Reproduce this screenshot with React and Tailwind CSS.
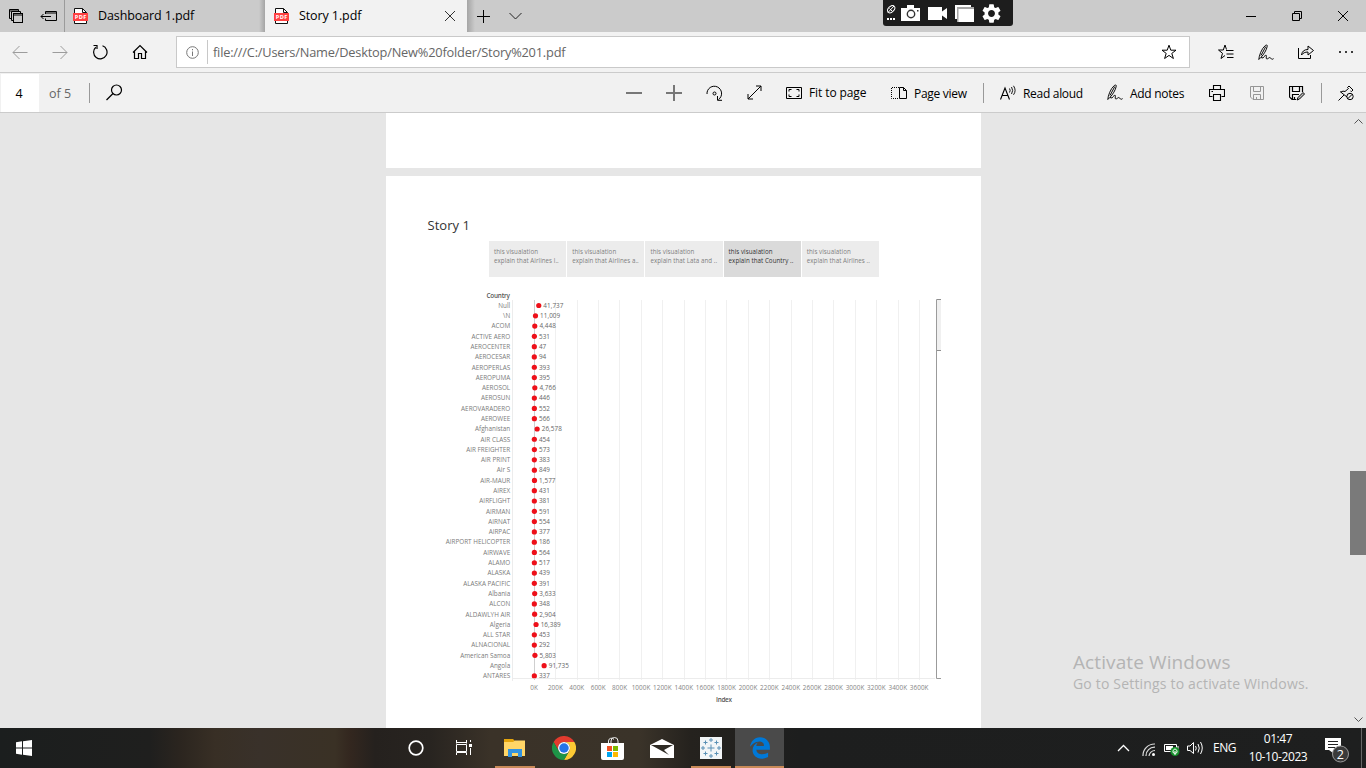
import React from "react";
import { FaEdgeLegacy } from "react-icons/fa6";
import { MdSettings } from "react-icons/md";

const Svg = ({ w = 16, h = 16, children, className = "", sw = 1 }) => (
  <svg width={w} height={h} viewBox={`0 0 ${w} ${h}`} fill="none" stroke="currentColor" strokeWidth={sw} className={"shrink-0 " + className}>
    {children}
  </svg>
);

const Cell = ({ className = "", children }) => (
  <div className={"flex h-full shrink-0 items-center justify-center " + className}>{children}</div>
);

const PdfIcon = () => (
  <Svg w={15} h={16}>
    <path d="M1.5 .5H9.5L13.5 4.5V15.5H1.5Z" fill="#fff" stroke="#111" />
    <path d="M9.5 .5V4.5H13.5" stroke="#111" />
    <rect x="0" y="5" width="15" height="8" fill="#ff4141" stroke="none" />
    <text x="7.5" y="11.3" textAnchor="middle" fontSize="5.6" fontWeight="700" fill="#fff" stroke="none" textLength="11.5" fontFamily="Open Sans, sans-serif">PDF</text>
  </Svg>
);

const Pen = ({ className }) => (
  <Svg w={16} h={17} className={className}>
    <path d="M.8 15.500C1 12 3.500 4.500 7.300 1.500C8.500 .5 9.600 1 9.200 2.500C8.500 6 5.800 10.500 3 13.300L.8 15.500M7.800 2.500L3 11.500M3 13.500L5 14C7 11 9 10.300 8.300 12.800C7.800 15 8.800 15.500 10.300 14.300C11.700 13.100 12.300 13.400 13 14.500C13.600 15.500 14.600 15.500 15.600 14.600" strokeWidth=".95" />
  </Svg>
);

function TitleBar() {
  return (
    <div className="relative flex h-8 shrink-0 bg-[#cbcbcb] text-black">
      <Cell className="w-8">
        <Svg w={14} h={14}>
          <path d="M2.5 9.5H.5V.5H9.5V2.5M.5 2H9.5" />
          <path d="M4.5 11.5H2.5V2.5H11.5V4.5" />
          <rect x="4.5" y="4.5" width="9" height="9" />
          <path d="M4.5 6H13.5" />
        </Svg>
      </Cell>
      <Cell className="w-8">
        <Svg w={17} h={12}>
          <path d="M5.5 4V1.5H16.5V10.5H5.5V8.500M5.5 3H16.5M1 6.5H11M3.5 4L1 6.5L3.5 9" />
        </Svg>
      </Cell>
      <div className="w-px bg-[#9b9b9b]" />
      <div className="flex w-[200px] items-center bg-linear-to-r from-[#cbcbcb] from-97% to-[#a5a5a5] pl-2">
        <PdfIcon />
        <span className="ml-2.5 text-[12.5px] tracking-[-0.1px]">Dashboard 1.pdf</span>
      </div>
      <div className="flex w-[202px] items-center bg-[#f2f2f2] pl-[9px]">
        <PdfIcon />
        <span className="ml-2.5 text-[12.5px] tracking-[-0.1px]">Story 1.pdf</span>
        <Svg w={10} h={10} className="mr-3 ml-auto text-[#333]">
          <path d="M0 0L10 10M10 0L0 10" />
        </Svg>
      </div>
      <div className="w-2 bg-linear-to-r from-[#a5a5a5] to-[#cbcbcb]" />
      <Cell className="w-[17px]">
        <Svg w={13} h={13}><path d="M6.5 0V13M0 6.5H13" /></Svg>
      </Cell>
      <Cell className="w-[47px]">
        <Svg w={13} h={8} className="text-[#222]"><path d="M.5 1L6.5 7L12.5 1" /></Svg>
      </Cell>
      <div className="ml-auto flex">
        <Cell className="w-[46px]"><Svg w={10} h={10}><path d="M0 5.5H10" /></Svg></Cell>
        <Cell className="w-[46px]"><Svg w={10} h={10}><path d="M2.5 2V.5H9.5V7.5H8M.5 2.5H7.5V9.5H.5Z" /></Svg></Cell>
        <Cell className="w-[46px]"><Svg w={10} h={10}><path d="M0 0L10 10M10 0L0 10" /></Svg></Cell>
      </div>
      <div className="absolute top-0 left-[883px] flex h-[26px] w-[130px] items-center rounded-b-[3px] bg-[#1d1d1d] text-white">
        <Svg w={9} h={16} className="ml-1">
          <ellipse cx="4.200" cy="4.200" rx="4.200" ry="2.800" transform="rotate(-45 4.200 4.200)" />
          <path d="M1 7.500L7 1M2.500 3.500L5 6" />
          <path d="M0 14H2M3 14H5M6 14H8" strokeWidth="2" />
        </Svg>
        <Svg w={19} h={16} className="ml-[5px]">
          <path d="M0 3H6V0H13V3H19V16H0Z" fill="#fff" stroke="none" />
          <circle cx="10" cy="9" r="3.7" stroke="#333" strokeWidth="1.4" />
          <rect x="16" y="5" width="1.5" height="1.5" fill="#333" stroke="none" />
        </Svg>
        <Svg w={19} h={13} className="ml-2">
          <path d="M0 0H14V4.5L19 1V12L14 8.5V13H0Z" fill="#fff" stroke="none" />
        </Svg>
        <Svg w={19} h={17} className="ml-2">
          <path d="M0 0H16V14H0Z" fill="#fff" stroke="none" />
          <path d="M2 2H19V17H2Z" fill="#a6a6a6" stroke="none" />
          <path d="M3.5 4H19V17H3.5Z" fill="#fff" stroke="none" />
        </Svg>
        <MdSettings className="ml-1.5 size-[23px] shrink-0" />
      </div>
    </div>
  );
}

function AddressBar() {
  return (
    <div className="flex h-[41px] shrink-0 items-center border-b border-[#cbcbcb] bg-[#f2f2f2] text-black">
      <Cell className="w-10"><Svg className="text-[#9c9c9c]"><path d="M15.500 8.500H1M7.500 2L1 8.500L7.500 15" /></Svg></Cell>
      <Cell className="w-10"><Svg className="text-[#9c9c9c]"><path d="M.5 8.500H15M8.500 2L15 8.500L8.500 15" /></Svg></Cell>
      <Cell className="w-10">
        <Svg><path d="M10.500 1.800A6.700 6.700 0 1 1 3.800 3.200M1.500 1.500H5V5" strokeWidth="1.200" /></Svg>
      </Cell>
      <Cell className="w-10">
        <Svg><path d="M1 8.500L8 1.500L15 8.500M2.500 7.500V14.500H6.500V9.500H9.500V14.500H13.500V7.500" strokeWidth="1.200" /></Svg>
      </Cell>
      <div className="ml-4 flex h-8 w-[1014px] items-center border border-[#c9c9c9] bg-white">
        <Svg w={13} h={13} className="mt-px ml-[9px] text-[#777]">
          <circle cx="6.500" cy="6.500" r="5.800" /><path d="M6.500 5.500V10M6.500 3V4.300" />
        </Svg>
        <div className="ml-2 h-6 w-px bg-[#c8c8c8]" />
        <span className="mt-0.5 ml-[5px] text-[12.800px] tracking-[-0.2px] text-[#666]">file:///C:/Users/Name/Desktop/New%20folder/Story%201.pdf</span>
        <Svg className="mr-3 ml-auto"><path d="M8 1.200L9.800 6.200H15L10.800 9.400L12.400 14.500L8 11.400L3.600 14.500L5.200 9.400L1 6.200H6.200Z" /></Svg>
      </div>
      <div className="ml-auto flex h-full">
        <Cell className="w-10"><Svg><path d="M8.500 5.500L7 1L5.300 6H.5L4.500 9.300L3 14.500L7 11.500M8 6.500H15.500M8.500 10H15.500M9 13.500H15.500" /></Svg></Cell>
        <Cell className="w-10"><Pen /></Cell>
        <Cell className="w-10"><Svg><path d="M.5 4V14.500H12.500V11M3.500 11C4 7.500 6 5.500 10 5.500V2L15.500 6.500L10 11V8C7 8 5 9 3.500 11Z" /></Svg></Cell>
        <Cell className="w-10"><Svg><path d="M1 8H3M7 8H9M13 8H15" strokeWidth="1.500" /></Svg></Cell>
      </div>
    </div>
  );
}

function PdfToolbar() {
  return (
    <div className="flex h-10 shrink-0 items-center border-b border-[#cbcbcb] bg-[#f1f1f1] text-[12px] text-black">
      <div className="mt-px ml-px flex h-[38px] w-[38px] items-center justify-center bg-white pt-0.5 pr-0.5 text-[12.5px]">4</div>
      <span className="mt-[3px] ml-2.5 w-10 text-[12.500px] text-[#666]">of 5</span>
      <div className="h-5 w-px bg-[#999]" />
      <Svg w={17} h={17} className="ml-4"><circle cx="10.500" cy="6" r="5" strokeWidth="1.200" /><path d="M7 9.500L.5 16" strokeWidth="1.200" /></Svg>
      <div className="ml-[491px] flex h-full">
        <Cell className="w-10"><Svg className="text-[#777]"><path d="M0 8H16" strokeWidth="2" /></Svg></Cell>
        <Cell className="w-10"><Svg className="text-[#777]"><path d="M0 8H16M8 0V16" strokeWidth="2" /></Svg></Cell>
        <Cell className="w-10"><Svg w={17}><circle cx="8.500" cy="8.500" r="1.500" /><path d="M1 9A7.300 7.300 0 1 1 12.500 14.500M11.500 11V15.300H16" /></Svg></Cell>
        <Cell className="w-10"><Svg w={15} h={15}><path d="M1 14L14 1M9 1H14V6M1 9V14H6" /></Svg></Cell>
      </div>
      <div className="ml-3 flex w-[105px] items-center">
        <Svg h={14}><path d="M.5 1.500H15.500V12.500H.5ZM3 5.500V3.500H5.500M10.500 3.500H13V5.500M13 8.500V10.500H10.500M5.500 10.500H3V8.500" /></Svg>
        <span className="mt-px ml-[7px] tracking-[-0.1px] whitespace-nowrap">Fit to page</span>
      </div>
      <div className="flex w-[92px] items-center">
        <Svg h={14}><path d="M8.500 1.500H12.500L15.500 4.500V12.500H8.500ZM12.500 1.500V4.500H15.500" /><path d="M8 1.500H.5V12.500H8" strokeDasharray="1 1" /></Svg>
        <span className="mt-0.5 ml-[7px] tracking-[-0.28px] whitespace-nowrap">Page view</span>
      </div>
      <div className="h-5 w-px bg-[#999]" />
      <div className="ml-4 flex w-[107px] items-center">
        <Svg><path d="M.5 14.500L5 3L9.500 14.500M2 10.500H8" strokeWidth="1.100" /><path d="M9.500 3.500Q10.800 5.500 9.500 7.500M11.500 2Q13.800 5.500 11.500 9M13.500 .8Q16.700 5.500 13.500 9.800" strokeWidth=".9" /></Svg>
        <span className="mt-0.5 ml-[7px] tracking-[-0.3px] whitespace-nowrap">Read aloud</span>
      </div>
      <div className="flex w-[90px] items-center">
        <Pen />
        <span className="mt-0.5 ml-[7px] tracking-[-0.28px] whitespace-nowrap">Add notes</span>
      </div>
      <Cell className="w-10"><Svg><path d="M4.500 4.500V.5H11.500V4.500M3.500 11.500H.5V4.500H15.500V11.500H12.500M4.500 9.500H11.500V15.500H4.500Z" strokeWidth="1.100" /><path d="M2.500 6.500H4" /></Svg></Cell>
      <Cell className="w-10"><Svg w={14} h={14} className="text-[#969696]"><path d="M.5 .5H13.500V13.500H3L.5 11ZM3.500 .5V5.500H10.500V.5M3.500 13.500V8.500H10.500V13.500M6.500 11V13" /></Svg></Cell>
      <Cell className="w-10"><Svg><path d="M7 14.500H3L.5 12V1.500H13.500V7M3.500 1.500V6.500H10.500V1.500M3.500 14V9.500H10M5.500 12V14" strokeWidth="1.200" /><path d="M8 15L9 12.500L14 7.500L15.500 9L10.500 14Z" fill="#bbb" /></Svg></Cell>
      <div className="ml-1 h-5 w-px bg-[#999]" />
      <Svg className="ml-4"><path d="M.5 15.500L6 10M2 6.500L9 12M3 7Q5 5.500 7 6.500L10.500 3.500L9.500 2.500L11 1L15 5L13.500 6.500L12.500 6" /><circle cx="12" cy="11.500" r="3.200" /><path d="M9.800 13.700L14.200 9.300" /></Svg>
    </div>
  );
}

const rows = [
  ["Null", "41,737"], ["\\N", "11,009"], ["ACOM", "4,448"], ["ACTIVE AERO", "531"], ["AEROCENTER", "47"],
  ["AEROCESAR", "94"], ["AEROPERLAS", "393"], ["AEROPUMA", "395"], ["AEROSOL", "4,766"], ["AEROSUN", "446"],
  ["AEROVARADERO", "552"], ["AEROWEE", "566"], ["Afghanistan", "26,578"], ["AIR CLASS", "454"], ["AIR FREIGHTER", "573"],
  ["AIR PRINT", "383"], ["Air S", "849"], ["AIR-MAUR", "1,577"], ["AIREX", "431"], ["AIRFLIGHT", "381"],
  ["AIRMAN", "591"], ["AIRNAT", "554"], ["AIRPAC", "377"], ["AIRPORT HELICOPTER", "186"], ["AIRWAVE", "564"],
  ["ALAMO", "517"], ["ALASKA", "439"], ["ALASKA PACIFIC", "391"], ["Albania", "3,633"], ["ALCON", "348"],
  ["ALDAWLYH AIR", "2,904"], ["Algeria", "16,389"], ["ALL STAR", "453"], ["ALNACIONAL", "292"],
  ["American Samoa", "5,803"], ["Angola", "91,735"], ["ANTARES", "337"],
];
const ticks = Array.from({ length: 19 }, (_, i) => i);

function Chart() {
  return (
    <svg width="515" height="424" viewBox="0 0 515 424" className="ml-[41px] block" fontFamily="Open Sans, sans-serif" fontSize="6.350">
      <defs><clipPath id="plot"><rect x="0" y="0" width="515" height="391.500" /></clipPath></defs>
      {ticks.map((i) => (
        <rect key={i} x={Math.round(106.800 + i * 21.400)} y="13" width="1" height="380" fill={i === 0 ? "#cfcfcf" : "#f0f0f0"} />
      ))}
      <path d="M85.500 13V394M85 391.500H508" stroke="#ececec" fill="none" />
      <text x="83" y="10.900" textAnchor="end" fontWeight="600" fill="#555" textLength="23.500">Country</text>
      <g clipPath="url(#plot)">
        {rows.map(([name, value], i) => {
          const y = 18.500 + i * 10.290;
          const x = 107.300 + (Number(value.replace(",", "")) / 200000) * 21.400;
          return (
            <g key={name}>
              <text x="83.200" y={y + 2.300} textAnchor="end" fill="#7a7a7a">{name}</text>
              <circle cx={x} cy={y} r="2.600" fill="#ee1019" />
              <text x={x + 4.600} y={y + 2.300} fill="#666" letterSpacing=".06">{value}</text>
            </g>
          );
        })}
      </g>
      {ticks.map((i) => (
        <text key={i} x={107 + i * 21.400} y="402.800" textAnchor="middle" fill="#858585" letterSpacing=".05">{i * 200}K</text>
      ))}
      <text x="297" y="415.200" textAnchor="middle" fontWeight="600" fill="#555" textLength="16">Index</text>
      <path d="M514 12.500H509.500V391.500H514" stroke="#9b9b9b" fill="none" />
      <rect x="510" y="12" width="4" height="51" fill="#f0f0f0" />
      <path d="M510 12.500H514M510 63.500H514" stroke="#8f8f8f" />
    </svg>
  );
}

const points = ["explain that Airlines l..", "explain that Airlines a..", "explain that Lata and ..", "explain that Country ..", "explain that Airlines .."];

function Viewer() {
  return (
    <div className="flex min-h-0 flex-1 bg-[#e6e6e6]">
      <div className="ml-[386px] flex w-[595px] flex-col gap-2">
        <div className="h-[55px] shrink-0 bg-white" />
        <div className="min-h-0 flex-1 overflow-hidden bg-white">
          <h1 className="mt-[40px] ml-[41.500px] h-[19px] text-[13px] leading-[18px] tracking-[0.05px] text-[#333]">Story 1</h1>
          <div className="mt-[6px] mb-[10px] ml-[103px] flex gap-px">
            {points.map((p, i) => (
              <div key={p} className={"h-9 w-[77.200px] pt-[5.500px] pl-[5px] text-[6.200px] leading-[9.300px] tracking-[0.05px] whitespace-nowrap " + (i === 3 ? "bg-[#dadada] text-[#333]" : "bg-[#ececec] text-[#808080]")}>
                <div>this visualation</div>
                <div>{p}</div>
              </div>
            ))}
          </div>
          <Chart />
        </div>
      </div>
      <div className="ml-[92px] flex-1 pt-[537px] text-[#b4b4b4]">
        <div className="text-[19px] leading-6 tracking-[0.1px] whitespace-nowrap">Activate Windows</div>
        <div className="text-[14px] leading-5 tracking-[0.18px] whitespace-nowrap">Go to Settings to activate Windows.</div>
      </div>
      <div className="flex w-4 flex-col items-center text-[#555]">
        <Svg w={9} h={5} className="mt-1.5"><path d="M.5 4.500L4.500 .5L8.500 4.500" /></Svg>
        <div className="mt-[347px] h-[84px] w-4 bg-[#7a7a7a]" />
        <Svg w={9} h={5} className="mt-auto mb-1.5"><path d="M.5 .5L4.500 4.500L8.500 .5" /></Svg>
      </div>
    </div>
  );
}

const AppTile = ({ active, open, children }) => (
  <div className={"flex h-full w-[49px] shrink-0 flex-col items-center " + (active ? "bg-[#4a4a4a]" : "")}>
    <div className="flex min-h-0 flex-1 items-center justify-center pt-0.5">{children}</div>
    <div className={"h-0.5 " + (active ? "w-full bg-[#c98a58]" : open ? "w-10 bg-[#c98a58]" : "w-10")} />
  </div>
);

function Taskbar() {
  return (
    <div className="flex h-10 shrink-0 items-center bg-[linear-gradient(90deg,#1b1e1e_0,#1f1f1e_150px,#2b251f_180px,#382f25_215px,#39312a_260px,#3a3125_335px,#33271f_350px,#25211e_375px,#282420_430px,#3a3228_490px,#3a3329_640px,#25221e_690px,#1d1e1e_800px,#1e1f1f_100%)] text-white">
      <Cell className="ml-px w-[45px]">
        <svg width="16" height="16" viewBox="0 0 16 16" fill="#fff"><path d="M0 2.300L6 1.300V7.500H0ZM7 1.200L16 0V7.500H7ZM0 8.500H6V14.700L0 13.700ZM7 8.500H16V16L7 14.800Z" /></svg>
      </Cell>
      <Cell className="ml-[346px] w-12"><Svg><circle cx="8" cy="8" r="6.800" strokeWidth="1.700" /></Svg></Cell>
      <Cell className="w-12">
        <Svg><path d="M.5 0V3.500M.5 2.500H11M10.500 0V3.500M.5 4.500H10.500V11.500H.5ZM.5 15V12.500H10.500V15M14.500 0V2M14.500 8V15" /><rect x="13" y="4" width="3" height="3" fill="#fff" stroke="none" /></Svg>
      </Cell>
      <div className="ml-0.5 flex h-full">
        <AppTile open>
          <Svg w={22} h={18}>
            <path d="M0 0H9L11 2H21V17H0Z" fill="#e5a50d" stroke="none" /><path d="M0 3H9L11 1.500H21V17H0Z" fill="#ffd667" stroke="none" />
            <path d="M4 18V10H18V18H14V14H8V18Z" fill="#3393df" stroke="none" />
          </Svg>
        </AppTile>
        <AppTile>
          <svg width="24" height="24" viewBox="0 0 48 48">
            <path d="M24 12H44.800A24 24 0 0 0 3.200 12L13.600 30A12 12 0 0 1 24 12" fill="#e33b2e" />
            <path d="M34.400 30L24 48A24 24 0 0 0 44.800 12H24A12 12 0 0 1 34.400 30" fill="#fcc934" />
            <path d="M13.600 30L3.200 12A24 24 0 0 0 24 48L34.400 30A12 12 0 0 1 13.600 30" fill="#1e9447" />
            <circle cx="24" cy="24" r="12" fill="#fff" /><circle cx="24" cy="24" r="9.500" fill="#2474e8" />
          </svg>
        </AppTile>
        <AppTile>
          <Svg w={23} h={23}>
            <path d="M7.500 7V4A3 3 0 0 1 13 2.500M10 7V4A3.500 3.500 0 0 1 17 4V7" stroke="#eee" />
            <path d="M0 6H23V21Q23 23 21 23H2Q0 23 0 21Z" fill="#fff" stroke="none" />
            <path d="M6 9H11V14H6Z" fill="#f25022" stroke="none" /><path d="M12 9H17V14H12Z" fill="#7fba00" stroke="none" />
            <path d="M6 15H11V20H6Z" fill="#00a4ef" stroke="none" /><path d="M12 15H17V20H12Z" fill="#ffb900" stroke="none" />
          </Svg>
        </AppTile>
        <AppTile>
          <Svg w={24} h={19}>
            <path d="M0 6L12 0L24 6V19H0Z" fill="#fff" stroke="none" /><path d="M1 6H23L14 11L19 16L11 11.500Z" fill="#2f2b25" stroke="none" />
          </Svg>
        </AppTile>
        <AppTile open>
          <Svg w={22} h={22}>
            <rect width="22" height="22" fill="#f2f5f7" stroke="none" />
            <path d="M11 7.500V14.500M7.500 11H14.500M11 1V5M9 3H13M11 17V21M9 19H13M1 11H5M3 9V13M17 11H21M19 9V13M5.500 3.500V7.500M3.500 5.500H7.500M16.500 3.500V7.500M14.500 5.500H18.500M5.500 14.500V18.500M3.500 16.500H7.500M16.500 14.500V18.500M14.500 16.500H18.500" stroke="#5a90b5" />
          </Svg>
        </AppTile>
        <AppTile active>
          <FaEdgeLegacy className="size-[22px] text-[#0078d7]" />
        </AppTile>
      </div>
      <div className="ml-auto flex h-full items-center">
        <Svg w={13} h={8}><path d="M1 7L6.500 1.500L12 7" strokeWidth="1.300" /></Svg>
        <Svg w={13} h={13} className="mt-0.5 ml-3">
          <path d="M1 13A11.500 11.500 0 0 1 13 1M4 13A8.500 8.500 0 0 1 13 4.200M7 13A6 6 0 0 1 13 7.500" stroke="#ddd" strokeWidth="1.200" /><circle cx="11.500" cy="11.500" r="1.500" fill="#fff" stroke="none" />
        </Svg>
        <Svg w={16} h={14} className="mt-1 ml-[9px]">
          <path d="M.5 1.500H12.500V8.500H.5Z" /><path d="M2 3H9V7H2Z" fill="#fff" stroke="none" /><path d="M14 3V6" />
          <circle cx="11" cy="8.500" r="4.500" fill="#16912b" stroke="none" /><path d="M11 12V8M9 9.500V7.500L11 5.800L13 7.500V9.500L11 10.500Z" stroke="#fff" />
        </Svg>
        <Svg w={17} h={14} className="ml-[7px]">
          <path d="M.5 5V9.500H3L6.500 12.500V1.500L3 5ZM8.500 5Q10 7 8.500 9.500M11 3Q13.500 7 11 11.500M13.500 1Q17 7 13.500 13" />
        </Svg>
        <span className="ml-[9px] w-6 text-[12px] tracking-[-0.5px]">ENG</span>
        <div className="ml-2 w-[66px] text-center text-[12px] leading-[18px] tracking-[-0.4px] whitespace-nowrap"><div>01:47</div><div>10-10-2023</div></div>
        <Svg w={26} h={26} className="mt-1 ml-[13px]">
          <path d="M1 1H17V13H9V16L5 13H1Z" fill="#fff" stroke="none" /><path d="M4 4.500H14M4 7.500H14M4 10.500H11" stroke="#222" />
          <circle cx="16.500" cy="17" r="8" fill="#3a3a3a" stroke="#999" />
          <text x="16.300" y="21.500" textAnchor="middle" fontSize="12.500" fill="#fff" stroke="none" fontFamily="Open Sans, sans-serif">2</text>
        </Svg>
        <div className="mr-1 ml-[11px] h-full w-px bg-[#666]" />
      </div>
    </div>
  );
}

export default function App() {
  return (
    <div className="flex h-[768px] w-[1366px] flex-col overflow-hidden font-['Open_Sans','Noto_Sans',sans-serif]">
      <TitleBar />
      <AddressBar />
      <PdfToolbar />
      <Viewer />
      <Taskbar />
    </div>
  );
}
